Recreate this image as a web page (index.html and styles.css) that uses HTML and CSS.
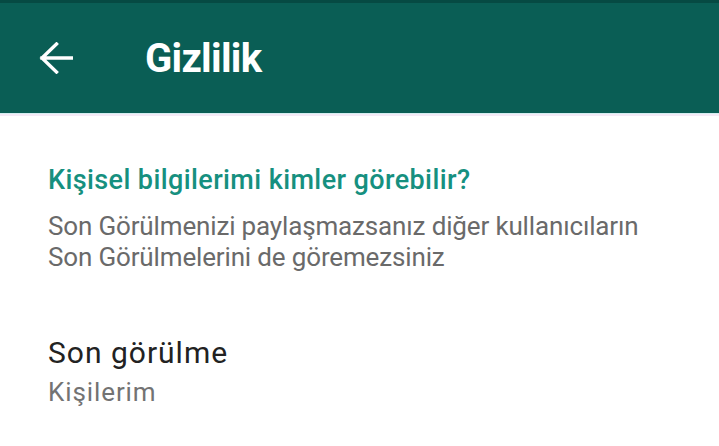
FILE: index.html
```html
<!DOCTYPE html>
<html lang="tr">
<head>
<meta charset="utf-8">
<title>Gizlilik</title>
<link rel="stylesheet" href="styles.css">
</head>
<body>
<header class="appbar">
  <button class="back" aria-label="Geri">
    <svg width="34" height="32" viewBox="0 0 34 32"><path d="M32.5 16H3M17.5 2L3 16l14.5 14" fill="none" stroke="#fff" stroke-width="3.4" stroke-linecap="square"/></svg>
  </button>
  <h1 class="title">Gizlilik</h1>
</header>
<main class="content">
  <section class="group">
    <h2 class="group-title">Kişisel bilgilerimi kimler görebilir?</h2>
    <p class="group-note">Son Görülmenizi paylaşmazsanız diğer kullanıcıların<br>Son Görülmelerini de göremezsiniz</p>
  </section>
  <div class="pref">
    <div class="pref-title">Son görülme</div>
    <div class="pref-value">Kişilerim</div>
  </div>
</main>
</body>
</html>
```
FILE: styles.css
```css
html, body {
  margin: 0;
  padding: 0;
  background: #fff;
  font-family: Roboto, "Noto Sans", sans-serif;
}

.appbar {
  height: 113px;
  background: #0a5e55;
  border-top: 3px solid #064a43;
  box-sizing: border-box;
  display: flex;
  align-items: center;
  padding-left: 39px;
  box-shadow: 0 1px 0 #d6eef0, 0 3px 0 #f4eaf6;
}

.back {
  background: none;
  border: 0;
  padding: 0;
  width: 34px;
  height: 32px;
  display: flex;
}

.title {
  margin: 0 0 0 72px;
  color: #fff;
  font-size: 40px;
  font-weight: 700;
  font-stretch: 96%;
  letter-spacing: -0.7px;
}

.content {
  padding: 0 48px;
}

.group {
  padding-top: 49px;
}

.group-title {
  margin: 0;
  color: #16907f;
  font-size: 27px;
  font-weight: 500;
  font-stretch: 95%;
  letter-spacing: 0.4px;
  line-height: 36px;
}

.group-note {
  margin: 13px 0 0;
  color: #6a6a6a;
  font-size: 26px;
  font-weight: 400;
  font-stretch: 88%;
  letter-spacing: -0.15px;
  line-height: 31px;
}

.pref {
  padding-top: 60px;
}

.pref-title {
  color: #222;
  font-size: 30px;
  line-height: 40px;
  letter-spacing: 1px;
}

.pref-value {
  color: #737373;
  font-size: 26px;
  line-height: 34px;
  letter-spacing: 0.9px;
  margin-top: 2px;
}
```
